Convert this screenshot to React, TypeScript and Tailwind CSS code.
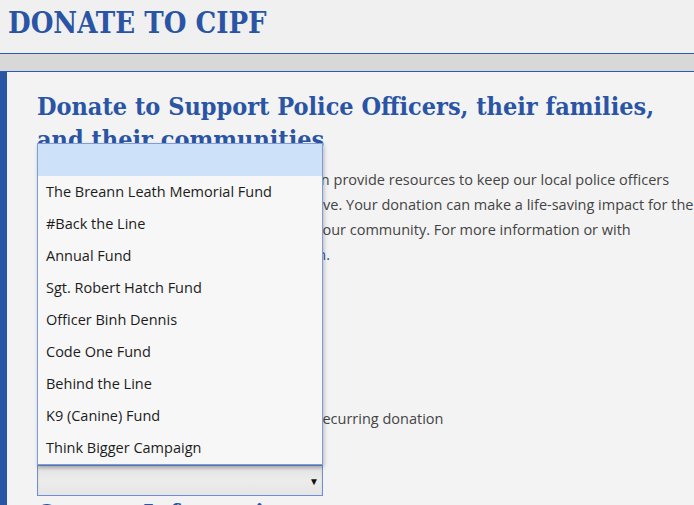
import { useState } from "react";

const funds = [
  "",
  "The Breann Leath Memorial Fund",
  "#Back the Line",
  "Annual Fund",
  "Sgt. Robert Hatch Fund",
  "Officer Binh Dennis",
  "Code One Fund",
  "Behind the Line",
  "K9 (Canine) Fund",
  "Think Bigger Campaign",
];

const serif = "font-['DejaVu_Serif_Condensed','Liberation_Serif',serif]";

export default function App() {
  const [selected, setSelected] = useState(0);

  return (
    <div className="min-h-screen bg-[#f3f3f3] font-['Open_Sans',sans-serif] text-[#444]">
      <header className="h-[53px] bg-[#f0f0f0] px-2 pt-[4px]">
        <h1 className={`${serif} text-[29px] leading-[38px] font-bold text-[#2a55a5]`}>
          DONATE TO CIPF
        </h1>
      </header>
      <div className="h-px bg-[#2d5bb3]" />
      <div className="h-[17px] bg-[#d8d8d8]" />
      <div className="h-px bg-[#2d5bb3]" />

      <div className="flex">
        <div className="w-[7px] shrink-0 bg-[#2a55a5]" />
        <main className="flex-1 pl-[30px] pt-[18px]">
          <h2 className={`${serif} text-[25px] leading-[33px] font-bold text-[#2a55a5]`}>
            Donate to Support Police Officers, their families,
            <br />
            and their communities
          </h2>

          <p className="mt-[11px] text-[14.5px] leading-[25px] whitespace-nowrap">
            Your kind gifts to the Police Foundation can provide resources to keep our local police officers
            <br />
            safe on the streets, healthy at work and alive. Your donation can make a life-saving impact for the
            <br />
            our brave officers who serve and protect your community. For more information or with
            <br />
            questions, you may contact <a href="#" className="text-[#2a55a5]">the foundation</a>.
          </p>

          <div className="mt-[70px] text-[14.5px] leading-[25px]">Donation Amount *</div>
          <input
            type="text"
            className="block h-[36px] w-[286px] border border-[#bbb] bg-white px-2 text-[14px]"
          />

          <label className="mt-[8px] flex h-[25px] items-center gap-[28px] text-[14.5px] leading-[25px]">
            <input type="checkbox" className="h-[13px] w-[13px]" />
            I would like to make this a monthly recurring donation
          </label>

          <div className="mt-[6px] text-[14.5px] leading-[25px]">Designate your gift to</div>

          <div className="relative mt-[3px] w-[286px]">
            <ul className="absolute bottom-full left-0 z-10 w-[286px] border border-[#7e9cd8] bg-[#f7f7f7] shadow-[1px_2px_4px_rgba(0,0,0,0.25)]">
              {funds.map((fund, i) => (
                <li
                  key={i}
                  onClick={() => setSelected(i)}
                  className={`h-[32px] pl-[8px] text-[14.5px] leading-[32px] text-[#1c1c1c] ${
                    i === selected ? "bg-[#cde2f8]" : ""
                  }`}
                >
                  {fund}
                </li>
              ))}
            </ul>
            <div className="flex h-[31px] items-center justify-end border border-[#6d8fd8] bg-gradient-to-b from-[#e2e2e2] via-[#ececec] to-[#e6e6e6] pr-[3px] text-[#111] shadow-[inset_0_3px_3px_rgba(0,0,0,0.08)]">
              <span className="text-[10px] leading-none">▼</span>
            </div>
          </div>

          <h2 className={`${serif} mt-[1px] text-[25px] leading-[33px] font-bold text-[#2a55a5]`}>
            Contact Information
          </h2>
        </main>
      </div>
    </div>
  );
}
